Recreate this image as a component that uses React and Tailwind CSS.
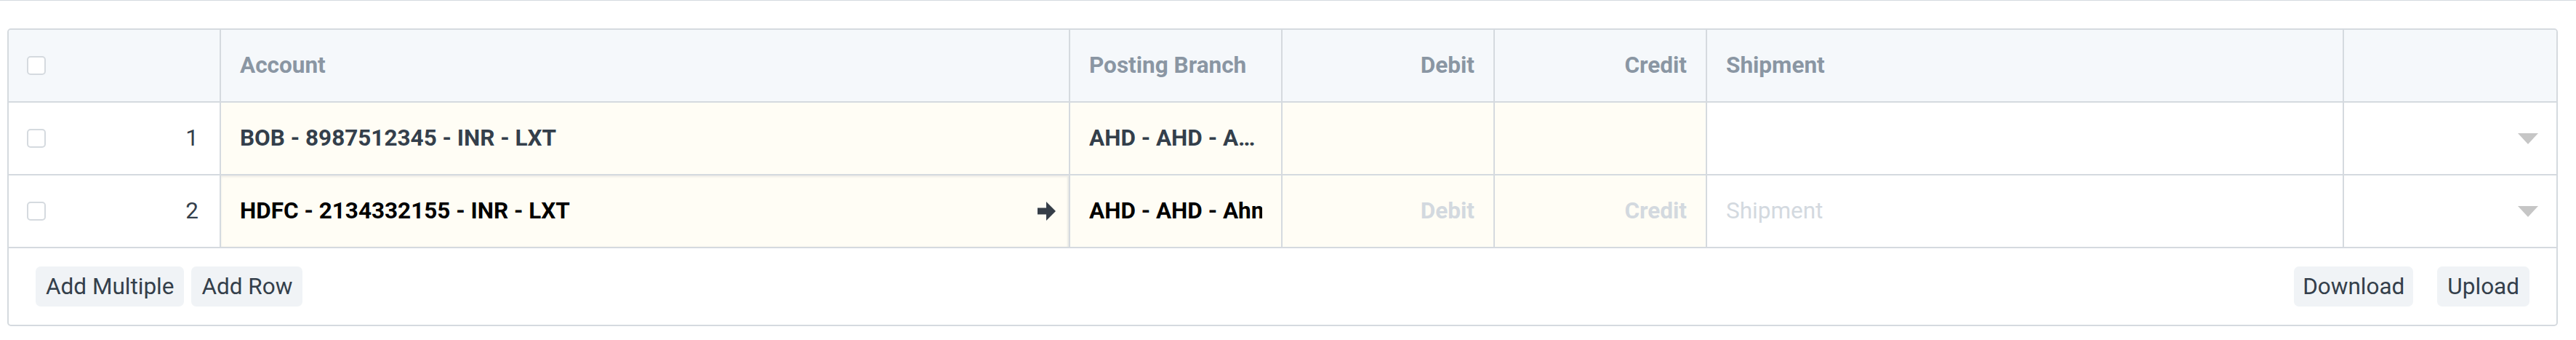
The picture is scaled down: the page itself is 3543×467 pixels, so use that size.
import React from "react";

const font = { fontFamily: "Roboto, 'Liberation Sans', sans-serif" };

function Checkbox() {
  return <div className="w-[26px] h-[26px] rounded-[5px] border-2 border-[#d5dadf] bg-white shrink-0" />;
}

function Arrow() {
  return (
    <svg width="25" height="26" viewBox="0 0 25 26" className="shrink-0">
      <polygon points="0,8.5 12,8.5 12,0 25,13 12,26 12,17.5 0,17.5" fill="#363e48" />
    </svg>
  );
}

function Caret() {
  return (
    <svg width="28" height="15" viewBox="0 0 28 15">
      <polygon points="0,0 28,0 14,15" fill="#c6c6c6" />
    </svg>
  );
}

const cols = "grid grid-cols-[292px_1168px_292px_292px_292px_876px_292px]";
const cell = "border-r-2 border-[#d5dadf] flex items-center px-[26px] min-w-0 overflow-hidden";

export default function App() {
  return (
    <div className="w-[3543px] h-[467px] bg-white text-[31.5px]" style={font}>
      <div className="h-px bg-[#d5dadf]" />
      <div className="ml-[10px] mt-[38px] w-[3508px] border-2 border-[#d5dadf] rounded-[5px] overflow-hidden">
        {/* header */}
        <div className={`${cols} h-[100px] bg-[#f5f8fb] border-b-2 border-[#d5dadf] font-bold text-[#8a96a3]`}>
          <div className={`${cell} pl-[25px]`}><Checkbox /></div>
          <div className={cell}>Account</div>
          <div className={cell}>Posting Branch</div>
          <div className={`${cell} justify-end`}>Debit</div>
          <div className={`${cell} justify-end`}>Credit</div>
          <div className={cell}>Shipment</div>
          <div className="" />
        </div>
        {/* row 1 */}
        <div className={`${cols} h-[100px] border-b-2 border-[#d5dadf]`}>
          <div className={`${cell} pl-[25px] pr-[29px] justify-between bg-white text-[#343f4b]`}>
            <Checkbox />
            <span>1</span>
          </div>
          <div className={`${cell} bg-[#fffdf5] font-bold text-[#343f4b]`}>BOB - 8987512345 - INR - LXT</div>
          <div className={`${cell} bg-[#fffdf5] font-bold text-[#343f4b]`}>
            <span className="truncate">AHD - AHD - Ahmedabad</span>
          </div>
          <div className={`${cell} bg-[#fffdf5]`} />
          <div className={`${cell} bg-[#fffdf5]`} />
          <div className={`${cell} bg-white`} />
          <div className="flex items-center justify-end pr-[25px] bg-white"><Caret /></div>
        </div>
        {/* row 2 */}
        <div className={`${cols} h-[100px] border-b-2 border-[#d5dadf]`}>
          <div className={`${cell} pl-[25px] pr-[29px] justify-between bg-white text-[#343f4b]`}>
            <Checkbox />
            <span>2</span>
          </div>
          <div className={`${cell} bg-[#fffdf5] font-bold text-black justify-between pr-[18px] shadow-[inset_0_2px_3px_#ecebe6,inset_-2px_0_2px_#ecebe6]`}>
            <span>HDFC - 2134332155 - INR - LXT</span>
            <Arrow />
          </div>
          <div className={`${cell} bg-[#fffdf5] font-bold text-black`}>
            <span className="whitespace-nowrap overflow-hidden">AHD - AHD - Ahmedabad</span>
          </div>
          <div className={`${cell} bg-[#fffdf5] justify-end font-bold text-[#d3d9df]`}>Debit</div>
          <div className={`${cell} bg-[#fffdf5] justify-end font-bold text-[#d3d9df]`}>Credit</div>
          <div className={`${cell} bg-white text-[#d3d9df]`}>Shipment</div>
          <div className="flex items-center justify-end pr-[25px] bg-white"><Caret /></div>
        </div>
        {/* footer */}
        <div className="h-[105px] flex items-center justify-between px-[37px] text-[#343f4b]">
          <div className="flex gap-[10px]">
            <button className="h-[55px] px-[14px] rounded-[7px] bg-[#f0f3f6]">Add Multiple</button>
            <button className="h-[55px] px-[14px] rounded-[7px] bg-[#f0f3f6]">Add Row</button>
          </div>
          <div className="flex gap-[33px]">
            <button className="h-[55px] px-[12px] rounded-[7px] bg-[#f0f3f6]">Download</button>
            <button className="h-[55px] px-[14px] rounded-[7px] bg-[#f0f3f6]">Upload</button>
          </div>
        </div>
      </div>
    </div>
  );
}
